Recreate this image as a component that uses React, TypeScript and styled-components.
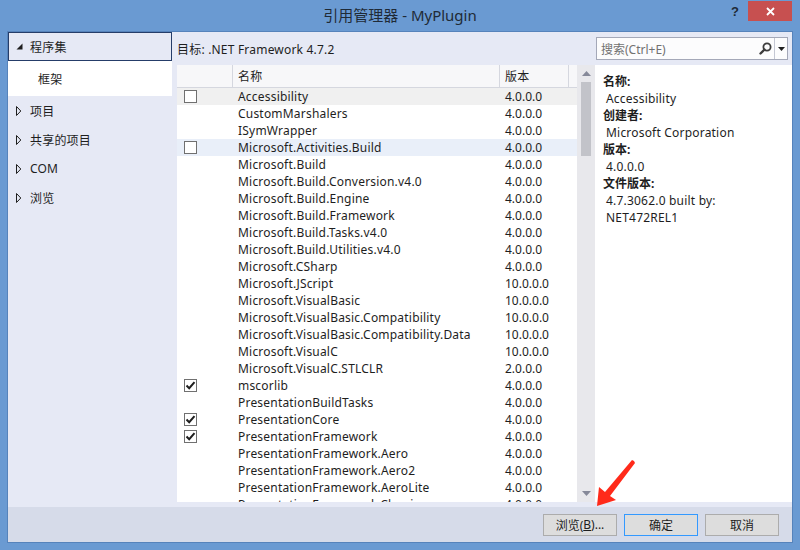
import React from "react";
import styled, { createGlobalStyle } from "styled-components";

const FONT = `"Noto Sans", "Noto Sans CJK SC", sans-serif`;

const Global = createGlobalStyle`
  html, body { margin: 0; padding: 0; overflow: hidden; }
  body { font-family: ${FONT}; font-size: 12px; color: #1e1e1e; letter-spacing: 0.2px; }
  * { box-sizing: border-box; }
`;

const Window = styled.div`
  position: relative;
  width: 800px;
  height: 550px;
  background: #6a9ad2;
  padding: 0 7px 7px 7px;
  display: flex;
  flex-direction: column;
`;

const TitleBar = styled.div`
  height: 31px;
  flex: none;
  display: grid;
  grid-template-columns: 1fr auto 1fr;
  align-items: start;
`;

const Title = styled.div`
  grid-column: 2;
  font-size: 15px;
  line-height: 30px;
  letter-spacing: 0;
  color: #1f2a36;
  white-space: nowrap;
`;

const Controls = styled.div`
  grid-column: 3;
  display: flex;
  justify-content: flex-end;
  padding-top: 1px;
  padding-right: 1px;
`;

const HelpButton = styled.div`
  width: 26px;
  height: 20px;
  display: flex;
  align-items: center;
  justify-content: center;
  font-family: "Liberation Sans", sans-serif;
  font-weight: bold;
  font-size: 13px;
  color: #1f2a36;
`;

const CloseButton = styled.div`
  width: 44px;
  height: 20px;
  background: #c75050;
  display: flex;
  align-items: center;
  justify-content: center;
`;

const Body = styled.div`
  flex: 1;
  display: flex;
  flex-direction: column;
  background: #e6e9f5;
  border: 1px solid #5683bb;
  min-height: 0;
`;

const Main = styled.div`
  flex: 1;
  display: flex;
  min-height: 0;
`;

const LeftPanel = styled.div`
  width: 164px;
  flex: none;
  display: flex;
  flex-direction: column;
`;

const TreeNode = styled.div<{ $selected?: boolean; $child?: boolean }>`
  display: flex;
  align-items: center;
  height: ${(p) => (p.$child ? 35 : 29)}px;
  padding-left: ${(p) => (p.$child ? 29 : 4)}px;
  background: ${(p) => (p.$child ? "#ffffff" : "transparent")};
  border: 1px solid ${(p) => (p.$selected ? "#253d69" : "transparent")};
  font-size: 12px;
  white-space: nowrap;
`;

const Expander = styled.span`
  width: 12px;
  height: 10px;
  margin-right: 5px;
  display: flex;
  align-items: center;
  justify-content: center;
  flex: none;
`;

const Center = styled.div`
  flex: 1;
  display: flex;
  flex-direction: column;
  margin-left: 5px;
  padding-bottom: 5px;
  min-width: 0;
`;

const TopRow = styled.div`
  height: 33px;
  flex: none;
  display: flex;
  align-items: center;
  justify-content: space-between;
  padding-right: 4px;
`;

const TargetLabel = styled.div`
  font-size: 12px;
  white-space: nowrap;
`;

const SearchBox = styled.div`
  width: 192px;
  height: 23px;
  background: #fcfcfd;
  border: 1px solid #a4a8b8;
  display: flex;
  align-items: stretch;
`;

const SearchText = styled.div`
  flex: 1;
  display: flex;
  align-items: center;
  padding-left: 4px;
  color: #717171;
  font-size: 12px;
  letter-spacing: 0;
`;

const SearchIcon = styled.div`
  width: 18px;
  display: flex;
  align-items: center;
  justify-content: center;
`;

const DropButton = styled.div`
  width: 13px;
  border-left: 1px solid #c4c7d3;
  display: flex;
  align-items: center;
  justify-content: center;
`;

const ContentRow = styled.div`
  flex: 1;
  display: flex;
  min-height: 0;
`;

const ListPane = styled.div`
  width: 418px;
  flex: none;
  display: flex;
  background: #ffffff;
`;

const Table = styled.div`
  flex: 1;
  overflow: hidden;
  display: flex;
  flex-direction: column;
`;

const COLS = "56px 267px 69px 1fr";

const HeaderRow = styled.div`
  height: 23px;
  flex: none;
  display: grid;
  grid-template-columns: ${COLS};
  background: #f7f7f9;
  border-bottom: 1px solid #d5d7df;
`;

const HeaderCell = styled.div<{ $last?: boolean }>`
  display: flex;
  align-items: center;
  padding-left: 5px;
  border-right: ${(p) => (p.$last ? "none" : "1px solid #d5d7df")};
  font-size: 12px;
`;

const Row = styled.div<{ $bg?: string }>`
  height: 17px;
  flex: none;
  display: grid;
  grid-template-columns: ${COLS};
  background: ${(p) => p.$bg || "transparent"};
  font-size: 12px;
  line-height: 17px;
  white-space: nowrap;
`;

const CheckCell = styled.div`
  display: flex;
  align-items: center;
  padding-left: 7px;
`;

const Box = styled.div`
  width: 13px;
  height: 13px;
  border: 1px solid #707070;
  background: #ffffff;
  display: flex;
  align-items: center;
  justify-content: center;
`;

const TextCell = styled.div`
  padding-left: 5px;
  overflow: hidden;
`;

const VersionCell = styled.div`
  padding-left: 5px;
  overflow: hidden;
  letter-spacing: 0;
`;

const Scrollbar = styled.div`
  width: 18px;
  flex: none;
  background: #e8e8ec;
  display: flex;
  flex-direction: column;
`;

const ScrollArrow = styled.div`
  height: 17px;
  display: flex;
  align-items: center;
  justify-content: center;
  padding-left: 1px;
`;

const Thumb = styled.div`
  height: 74px;
  margin: 0 4px 0 4px;
  background: #c2c3c9;
`;

const ScrollSpacer = styled.div`
  flex: 1;
`;

const Details = styled.div`
  flex: 1;
  background: #ffffff;
  padding: 8px 0 0 8px;
  line-height: 17px;
  font-size: 12px;
`;

const DetailLabel = styled.div`
  font-weight: bold;
  letter-spacing: 0;
`;

const DetailValue = styled.div`
  padding-left: 3px;
`;

const BottomBar = styled.div`
  height: 35px;
  flex: none;
  background: #d6dbe9;
  display: flex;
  align-items: center;
  justify-content: flex-end;
  gap: 7px;
  padding-right: 13px;
`;

const Button = styled.div<{ $default?: boolean }>`
  width: 74px;
  height: 22px;
  background: #dddddd;
  border: 1px solid ${(p) => (p.$default ? "#3399ff" : "#acacac")};
  display: flex;
  align-items: center;
  justify-content: center;
  font-size: 12px;
  letter-spacing: 0;
`;

const Arrow = styled.svg`
  position: absolute;
  left: 590px;
  top: 455px;
`;

type Item = { name: string; ver: string; check?: "empty" | "on"; bg?: string };

const items: Item[] = [
  { name: "Accessibility", ver: "4.0.0.0", check: "empty", bg: "#f0f0f0" },
  { name: "CustomMarshalers", ver: "4.0.0.0" },
  { name: "ISymWrapper", ver: "4.0.0.0" },
  { name: "Microsoft.Activities.Build", ver: "4.0.0.0", check: "empty", bg: "#e9eff9" },
  { name: "Microsoft.Build", ver: "4.0.0.0" },
  { name: "Microsoft.Build.Conversion.v4.0", ver: "4.0.0.0" },
  { name: "Microsoft.Build.Engine", ver: "4.0.0.0" },
  { name: "Microsoft.Build.Framework", ver: "4.0.0.0" },
  { name: "Microsoft.Build.Tasks.v4.0", ver: "4.0.0.0" },
  { name: "Microsoft.Build.Utilities.v4.0", ver: "4.0.0.0" },
  { name: "Microsoft.CSharp", ver: "4.0.0.0" },
  { name: "Microsoft.JScript", ver: "10.0.0.0" },
  { name: "Microsoft.VisualBasic", ver: "10.0.0.0" },
  { name: "Microsoft.VisualBasic.Compatibility", ver: "10.0.0.0" },
  { name: "Microsoft.VisualBasic.Compatibility.Data", ver: "10.0.0.0" },
  { name: "Microsoft.VisualC", ver: "10.0.0.0" },
  { name: "Microsoft.VisualC.STLCLR", ver: "2.0.0.0" },
  { name: "mscorlib", ver: "4.0.0.0", check: "on" },
  { name: "PresentationBuildTasks", ver: "4.0.0.0" },
  { name: "PresentationCore", ver: "4.0.0.0", check: "on" },
  { name: "PresentationFramework", ver: "4.0.0.0", check: "on" },
  { name: "PresentationFramework.Aero", ver: "4.0.0.0" },
  { name: "PresentationFramework.Aero2", ver: "4.0.0.0" },
  { name: "PresentationFramework.AeroLite", ver: "4.0.0.0" },
  { name: "PresentationFramework.Classic", ver: "4.0.0.0" },
];

const Filled = () => (
  <svg width="7" height="7" viewBox="0 0 7 7">
    <polygon points="6.5,0.5 6.5,6.5 0.5,6.5" fill="#1e1e1e" />
  </svg>
);

const Hollow = () => (
  <svg width="6" height="10" viewBox="0 0 6 10">
    <polygon points="0.5,0.5 4.8,5 0.5,9.5" fill="none" stroke="#1e1e1e" strokeWidth="1" />
  </svg>
);

const Check = () => (
  <svg width="11" height="11" viewBox="0 0 11 11">
    <polyline points="1.5,5.5 4.2,8.2 9.5,2.2" fill="none" stroke="#1e1e1e" strokeWidth="2" />
  </svg>
);

export default function App() {
  return (
    <>
      <Global />
      <Window>
        <TitleBar>
          <Title>引用管理器 - MyPlugin</Title>
          <Controls>
            <HelpButton>?</HelpButton>
            <CloseButton>
              <svg width="9" height="9" viewBox="0 0 9 9">
                <path d="M1 1 L8 8 M8 1 L1 8" stroke="#ffffff" strokeWidth="1.8" />
              </svg>
            </CloseButton>
          </Controls>
        </TitleBar>
        <Body>
          <Main>
            <LeftPanel>
              <TreeNode $selected>
                <Expander><Filled /></Expander>程序集
              </TreeNode>
              <TreeNode $child>框架</TreeNode>
              <TreeNode>
                <Expander><Hollow /></Expander>项目
              </TreeNode>
              <TreeNode>
                <Expander><Hollow /></Expander>共享的项目
              </TreeNode>
              <TreeNode>
                <Expander><Hollow /></Expander>COM
              </TreeNode>
              <TreeNode>
                <Expander><Hollow /></Expander>浏览
              </TreeNode>
            </LeftPanel>
            <Center>
              <TopRow>
                <TargetLabel>目标: .NET Framework 4.7.2</TargetLabel>
                <SearchBox>
                  <SearchText>搜索(Ctrl+E)</SearchText>
                  <SearchIcon>
                    <svg width="13" height="13" viewBox="0 0 13 13">
                      <circle cx="8" cy="5" r="3.6" fill="none" stroke="#3c3c3c" strokeWidth="1.8" />
                      <path d="M5.5 7.5 L1.5 11.5" stroke="#3c3c3c" strokeWidth="2.4" strokeLinecap="round" />
                    </svg>
                  </SearchIcon>
                  <DropButton>
                    <svg width="7" height="4" viewBox="0 0 7 4">
                      <polygon points="0,0 7,0 3.5,4" fill="#1e1e1e" />
                    </svg>
                  </DropButton>
                </SearchBox>
              </TopRow>
              <ContentRow>
                <ListPane>
                  <Table>
                    <HeaderRow>
                      <HeaderCell />
                      <HeaderCell>名称</HeaderCell>
                      <HeaderCell>版本</HeaderCell>
                      <HeaderCell $last />
                    </HeaderRow>
                    {items.map((it) => (
                      <Row key={it.name} $bg={it.bg}>
                        <CheckCell>
                          {it.check && <Box>{it.check === "on" && <Check />}</Box>}
                        </CheckCell>
                        <TextCell>{it.name}</TextCell>
                        <VersionCell>{it.ver}</VersionCell>
                        <div />
                      </Row>
                    ))}
                  </Table>
                  <Scrollbar>
                    <ScrollArrow>
                      <svg width="9" height="5" viewBox="0 0 9 5">
                        <polygon points="0,5 9,5 4.5,0" fill="#868999" />
                      </svg>
                    </ScrollArrow>
                    <Thumb />
                    <ScrollSpacer />
                    <ScrollArrow>
                      <svg width="9" height="5" viewBox="0 0 9 5">
                        <polygon points="0,0 9,0 4.5,5" fill="#868999" />
                      </svg>
                    </ScrollArrow>
                  </Scrollbar>
                </ListPane>
                <Details>
                  <DetailLabel>名称:</DetailLabel>
                  <DetailValue>Accessibility</DetailValue>
                  <DetailLabel>创建者:</DetailLabel>
                  <DetailValue>Microsoft Corporation</DetailValue>
                  <DetailLabel>版本:</DetailLabel>
                  <DetailValue>4.0.0.0</DetailValue>
                  <DetailLabel>文件版本:</DetailLabel>
                  <DetailValue>4.7.3062.0 built by:</DetailValue>
                  <DetailValue>NET472REL1</DetailValue>
                </Details>
              </ContentRow>
            </Center>
          </Main>
          <BottomBar>
            <Button>浏览(<u>B</u>)...</Button>
            <Button $default>确定</Button>
            <Button>取消</Button>
          </BottomBar>
        </Body>
        <Arrow width="50" height="56" viewBox="0 0 50 56">
          <polygon
            points="44,6 45,8 20,41 26,45 7,51 9,32 15,37 42,5"
            fill="#ff2a1a"
          />
        </Arrow>
      </Window>
    </>
  );
}
